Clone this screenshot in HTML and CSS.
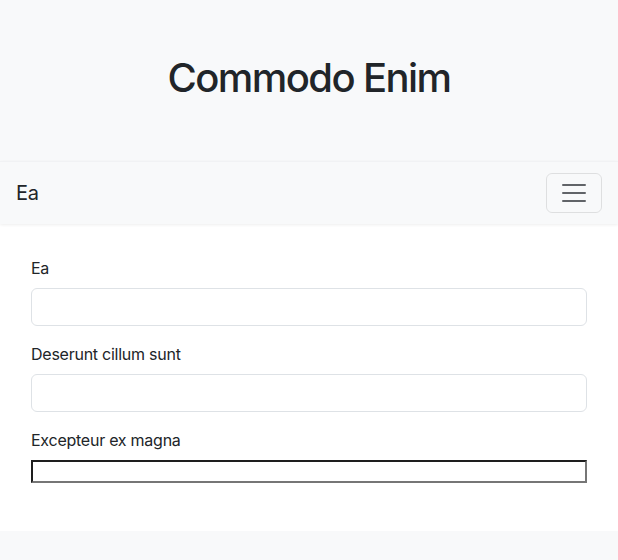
FILE: index.html
```html
<!DOCTYPE html>
<html>
<head>
<meta charset="utf-8">
<link rel="stylesheet" href="styles.css">
</head>
<body>
<header class="hero">
  <h1 class="hero-title">Commodo Enim</h1>
</header>
<nav class="navbar">
  <span class="brand">Ea</span>
  <button class="toggler" type="button" aria-label="Toggle navigation">
    <svg width="30" height="30" viewBox="0 0 30 30"><path stroke="rgba(33,37,41,0.7)" stroke-linecap="round" stroke-miterlimit="10" stroke-width="2" d="M4 7h22M4 15h22M4 23h22"/></svg>
  </button>
</nav>
<main class="content">
  <div class="field">
    <label class="label">Ea</label>
    <input class="control" type="text">
  </div>
  <div class="field">
    <label class="label">Deserunt cillum sunt</label>
    <input class="control" type="text">
  </div>
  <div class="field">
    <label class="label">Excepteur ex magna</label>
    <input class="plain" type="text">
  </div>
</main>
<footer class="footer"></footer>
</body>
</html>
```
FILE: styles.css
```css
html, body {
  margin: 0;
  padding: 0;
}
body {
  font-family: Inter, "Liberation Sans", sans-serif;
  font-size: 16px;
  line-height: 1.5;
  color: #212529;
  background: #f8f9fa;
  letter-spacing: -0.25px;
}
.hero {
  background: #f8f9fa;
  height: 161px;
  display: flex;
  align-items: center;
  justify-content: center;
}
.hero-title {
  margin: 0 0 6px;
  font-size: 40px;
  font-weight: 500;
  line-height: 1.2;
  letter-spacing: -1.6px;
}
.navbar {
  background: #f8f9fa;
  border-top: 1px solid #f1f2f4;
  display: flex;
  align-items: center;
  justify-content: space-between;
  padding: 11px 16px 11px;
  box-shadow: 0 1px 3px rgba(0,0,0,0.07);
  position: relative;
}
.brand {
  font-size: 20px;
  line-height: 30px;
  letter-spacing: -0.3px;
}
.toggler {
  width: 56px;
  height: 40px;
  padding: 4px 12px;
  background: transparent;
  border: 1px solid rgba(0,0,0,0.1);
  border-radius: 6px;
  display: flex;
  align-items: center;
  justify-content: center;
}
.content {
  background: #fff;
  padding: 32px 31px 32px;
}
.field {
  margin-bottom: 16px;
}
.label {
  display: block;
  margin-bottom: 8px;
}
.control {
  display: block;
  width: 100%;
  box-sizing: border-box;
  height: 38px;
  padding: 6px 12px;
  font: inherit;
  border: 1px solid #dee2e6;
  border-radius: 6px;
  background: #fff;
}
.plain {
  display: block;
  width: 100%;
  box-sizing: border-box;
  height: 23px;
  margin-top: 1px;
  padding: 1px 2px;
  background: #fff;
  border-style: solid;
  border-width: 2px;
  border-color: #1e1e1e #767676 #767676 #1e1e1e;
  border-radius: 0;
  appearance: none;
}
.footer {
  height: 28px;
  background: #f8f9fa;
  border-radius: 6px 6px 0 0;
}
```
